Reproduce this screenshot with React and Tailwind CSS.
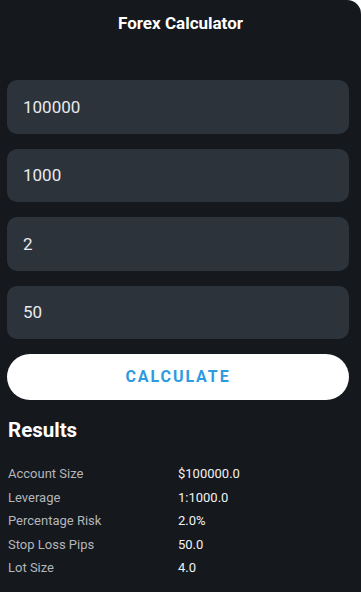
import React, { useState } from 'react'

const fields = ['100000', '1000', '2', '50']

const results = [
  ['Account Size', '$100000.0'],
  ['Leverage', '1:1000.0'],
  ['Percentage Risk', '2.0%'],
  ['Stop Loss Pips', '50.0'],
  ['Lot Size', '4.0'],
]

export default function App() {
  const [values, setValues] = useState(fields)

  return (
    <div
      className="w-[361px] h-[592px] bg-[#15181d] text-white overflow-hidden rounded-tr-[14px]"
      style={{ fontFamily: 'Roboto, "Noto Sans", sans-serif' }}
    >
      <h1 className="pt-[12px] h-[80px] text-center text-[17px] font-bold leading-[22px]">Forex Calculator</h1>
      <div className="px-[7px] pr-[12px] flex flex-col gap-[15px]">
        {values.map((v, i) => (
          <input
            key={i}
            value={v}
            onChange={(e) => {
              const next = [...values]
              next[i] = e.target.value
              setValues(next)
            }}
            className="h-[53.5px] w-full rounded-[10px] bg-[#2c333b] px-[16px] text-[17px] text-[#e8eaed] outline-none"
          />
        ))}
        <button
          type="button"
          className="h-[46px] w-full rounded-full bg-white text-[#2e9be0] text-[16px] font-bold tracking-[0.12em]"
        >
          CALCULATE
        </button>
      </div>
      <div className="px-[8px]">
        <h2 className="mt-[18px] text-[20.5px] font-bold leading-[24px]">Results</h2>
        <div className="mt-[20px] flex flex-col">
          {results.map(([label, value]) => (
            <div key={label} className="flex h-[23.5px] items-center text-[13px]">
              <span className="w-[170px] text-[#b3b6bb]">{label}</span>
              <span className="text-[#f1f2f3]">{value}</span>
            </div>
          ))}
        </div>
      </div>
    </div>
  )
}
